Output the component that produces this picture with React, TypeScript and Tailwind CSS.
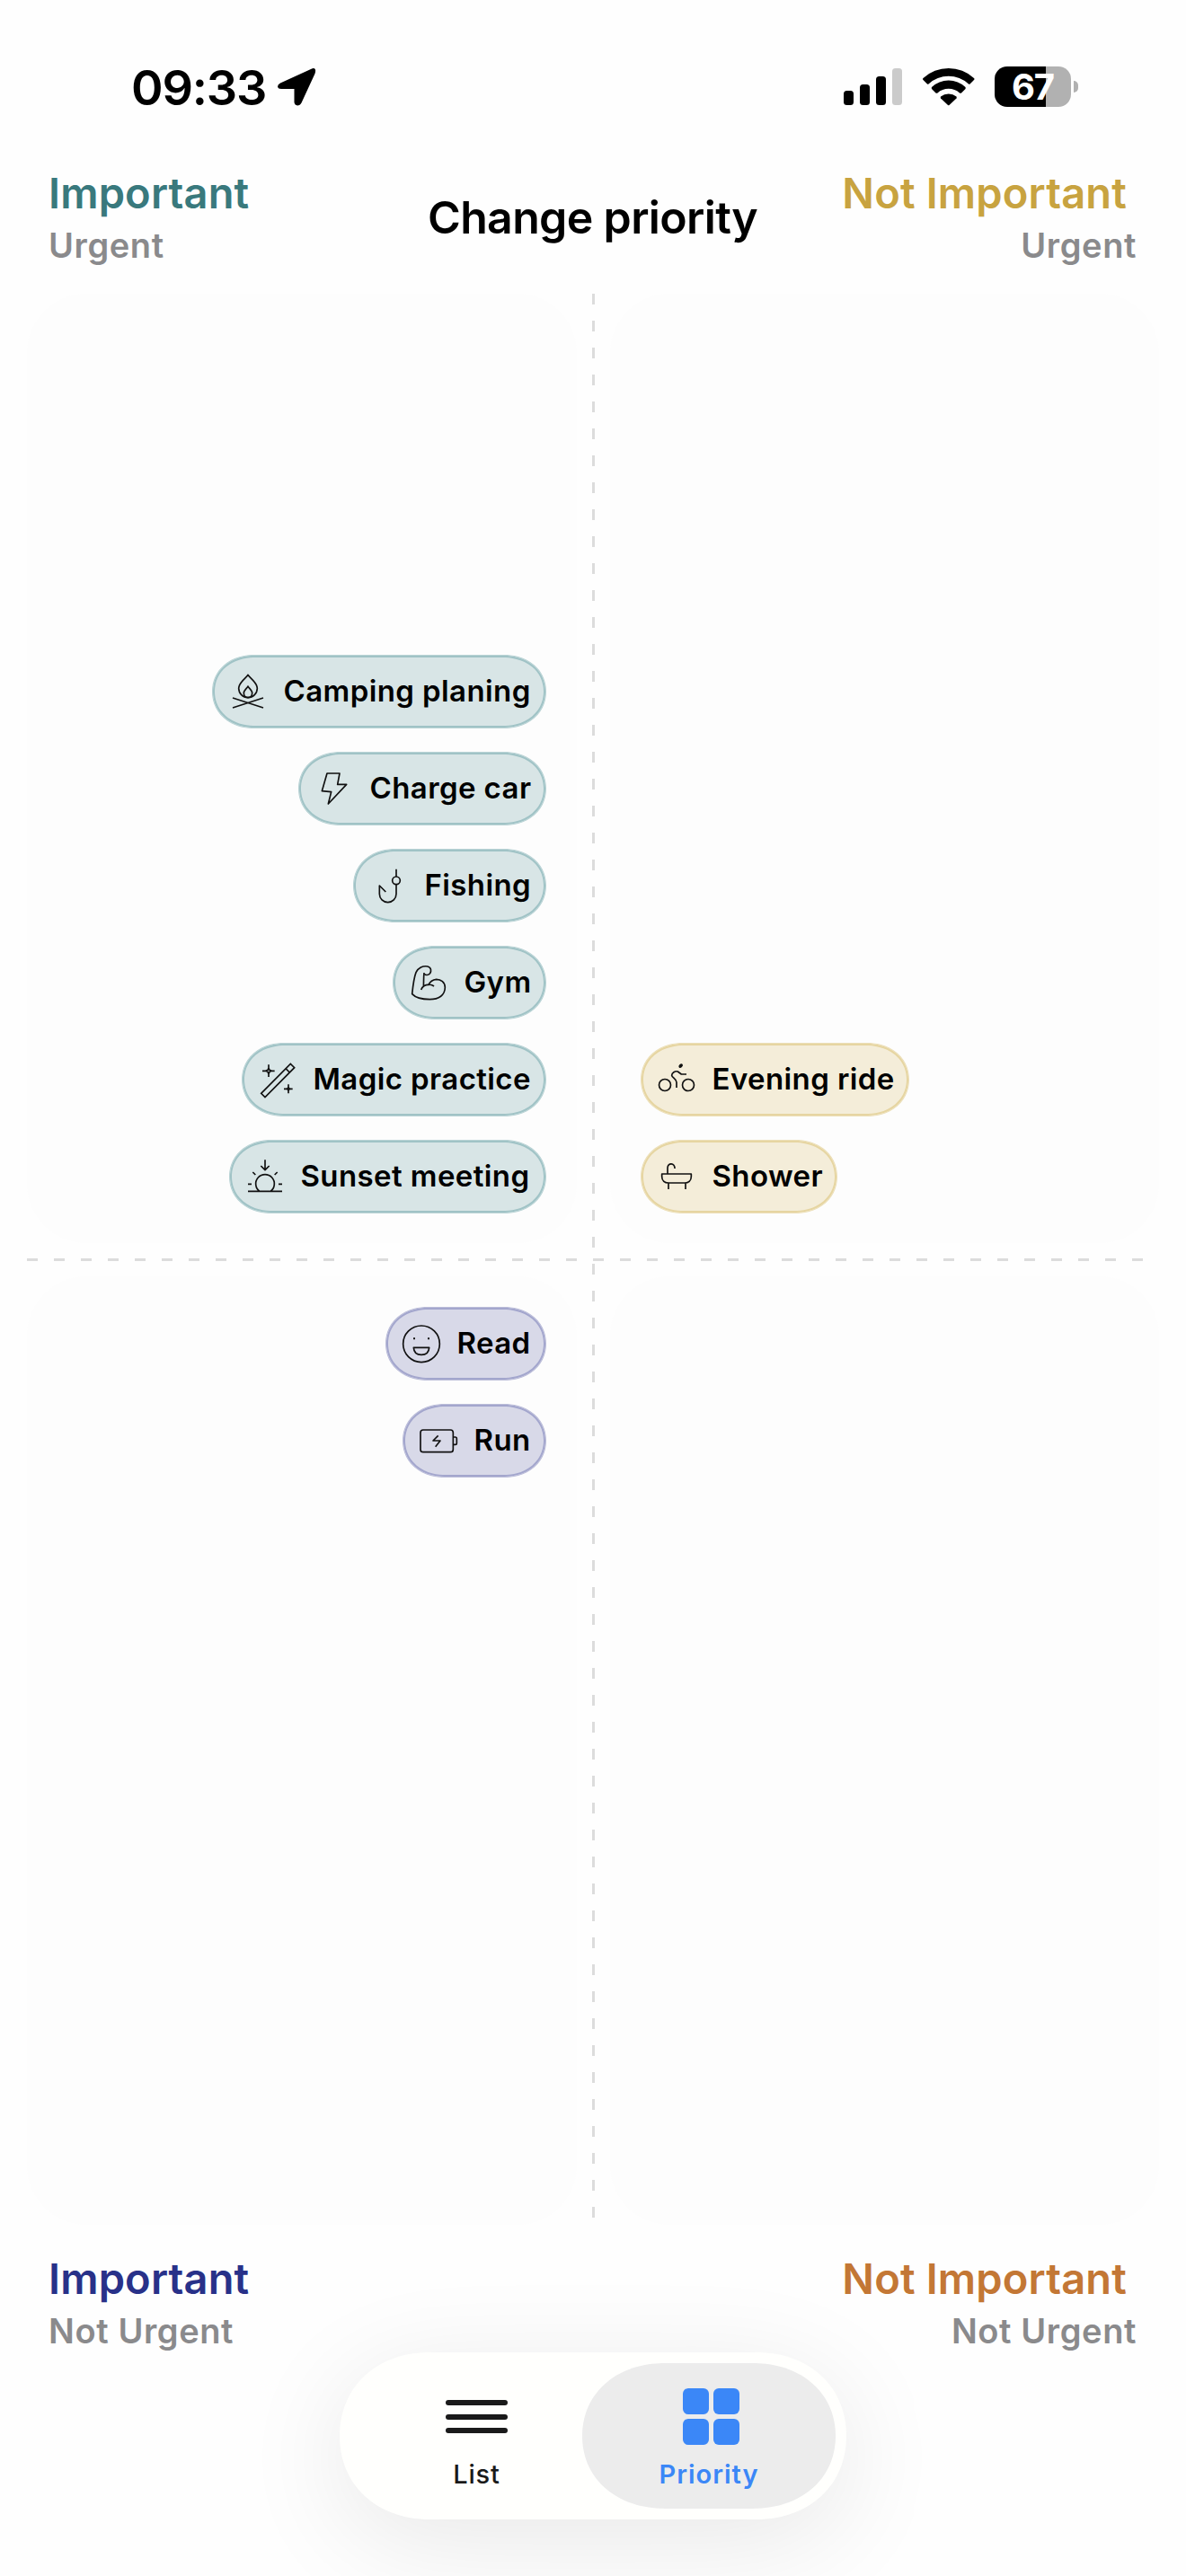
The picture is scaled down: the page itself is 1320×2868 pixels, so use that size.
import type { ReactNode } from "react";

type Tone = "teal" | "gold" | "indigo";

const toneClass: Record<Tone, string> = {
  teal: "bg-[#d8e5e6] border-[#b9d3d5] shadow-[inset_0_0_0_2px_#a0c3c6]",
  gold: "bg-[#f4edd9] border-[#ecdfb8] shadow-[inset_0_0_0_2px_#e6d5a1]",
  indigo: "bg-[#d8d9e8] border-[#bbbdd9] shadow-[inset_0_0_0_2px_#a3a6cd]",
};

function Icon({ cx, cy, children }: { cx: number; cy: number; children: ReactNode }) {
  return (
    <svg
      className="h-11 w-11 shrink-0"
      viewBox={`${cx - 66} ${cy - 66} 132 132`}
      fill="none"
      stroke="#111"
      strokeWidth="5"
      strokeLinejoin="round"
    >
      {children}
    </svg>
  );
}

const Campfire = () => (
  <Icon cx={168} cy={165}>
    <path d="M168 109C164 118 137 134 137 154C137 171 151 185 168 185S199 171 199 154C199 134 172 118 168 109Z" />
    <path d="M168 147C166 154 153 160 154 171C155 180 161 185 168 185S181 180 182 171C183 160 170 154 168 147Z" />
    <path d="M117 186L219 219M219 186L117 219" />
  </Icon>
);
const Bolt = () => (
  <Icon cx={455} cy={488}>
    <path d="M431 437H473L466 474H496L435 539L445 499L414 496Z" />
  </Icon>
);
const Hook = () => (
  <Icon cx={639} cy={812}>
    <path d="M663 757V782M663 808V840A28 28 0 0 1 607 840V812L628 833" />
    <circle cx="663" cy="795" r="13" />
  </Icon>
);
const Arm = () => (
  <Icon cx={771} cy={176}>
    <path d="M757 147C760 152 772 152 776 145C780 138 781 126 768 122C752 119 736 127 729 142C722 160 719 185 716 214C727 226 745 232 775 232C805 232 826 218 826 192C826 175 812 165 797 165C786 166 776 172 771 183" />
    <path d="M756 143C754 160 755 175 754 188M746 200C750 188 762 182 772 183C779 182 784 184 789 188" />
  </Icon>
);
const Wand = () => (
  <Icon cx={267} cy={500}>
    <path d="M212 546L310 447L323 460L225 559ZM294 463L307 476" strokeLinejoin="miter" />
    <path d="M237 450V461M237 481V491M216 471H227M247 471H257M237 461L240 468L247 471L240 474L237 481L234 474L227 471L234 468Z" />
    <path d="M303 516V525M303 537V546M288 531H297M309 531H317M303 525L305 529L309 531L305 533L303 537L301 533L297 531L301 529Z" />
  </Icon>
);
const Sunset = () => (
  <Icon cx={225} cy={824}>
    <path d="M225 768V801M211 788L225 802L239 788M184 809L193 818M266 809L257 818M168 849H180M270 849H282M168 873H282M207 873A31 31 0 1 1 243 873" />
  </Icon>
);
const Bike = () => (
  <Icon cx={219} cy={186}>
    <circle cx="180" cy="204" r="19.5" />
    <circle cx="258" cy="204" r="19.5" />
    <path d="M252 168H235L223 159C214 156 203 164 203 172C204 179 219 184 219 195V213" />
    <ellipse cx="233" cy="140" rx="8" ry="5.5" transform="rotate(-45 233 140)" fill="#111" stroke="none" />
  </Icon>
);
const Tub = () => (
  <Icon cx={219} cy={510}>
    <path d="M170 501H268V510C268 524 258 531 246 531H192C180 531 170 524 170 510ZM189 500V481C189 463 214 463 213 483M192 531V552M249 531V552" />
  </Icon>
);
const Smile = () => (
  <Icon cx={207} cy={377}>
    <circle cx="207" cy="378" r="61" />
    <path d="M180 360H186M228 360H234" strokeWidth="6" />
    <path d="M181 390H233C232 406 221 414 207 414S182 406 181 390Z" />
  </Icon>
);
const Battery = () => (
  <Icon cx={264} cy={701}>
    <rect x="204" y="665" width="109" height="74" rx="9" />
    <path d="M313 689H320Q325 689 325 694V709Q325 714 320 714H313M263 684L246 701H270L254 721" />
  </Icon>
);

function Pill({ tone, icon, label, w }: { tone: Tone; icon: ReactNode; label: string; w: string }) {
  return (
    <div
      className={`flex h-[82px] items-center gap-[18px] rounded-[47px/41px] border pl-[17px] [corner-shape:superellipse(1.08)] ${w} ${toneClass[tone]}`}
    >
      {icon}
      <span className="text-[33px] font-semibold leading-none tracking-[0.4px] whitespace-nowrap text-black">
        {label}
      </span>
    </div>
  );
}

function Heading({ title, sub, color, right }: { title: string; sub: string; color: string; right?: boolean }) {
  return (
    <div className={`flex flex-col ${right ? "items-end" : "items-start"}`}>
      <h2
        className={`text-[47px] leading-[58px] font-semibold tracking-[0.15px] whitespace-nowrap ${color} ${right ? "mr-[11px]" : ""}`}
      >
        {title}
      </h2>
      <p className="text-[38px] leading-[58px] font-semibold tracking-[0.6px] whitespace-nowrap text-[#8a8a8c]">
        {sub}
      </p>
    </div>
  );
}

function StatusBar() {
  return (
    <div className="flex h-[186px] shrink-0 items-start justify-between pt-[72px] pr-[120px] pl-[146px]">
      <div className="flex h-[50px] items-center">
        <span className="w-[163px] pt-[2px] text-[54px] leading-none font-semibold tracking-[-1.2px]">09:33</span>
        <svg className="h-[42px] w-[43px]" viewBox="0 0 43 42">
          <path
            d="M37.500 .8L3 16.500Q0 18 0 20.500Q.5 23 4 23H18.500V38Q19 41 22 41.500Q25 41.500 26.500 38.500L41.500 6Q43 1.500 41 .3Q39.500-.3 37.500 .8Z"
            fill="#000"
          />
        </svg>
      </div>
      <div className="flex h-[50px] items-start pt-[2px]">
        <svg className="h-[45px] w-[168px]" viewBox="0 0 168 45">
          <rect x="0" y="27" width="11" height="16" rx="3.500" />
          <rect x="18" y="20" width="11" height="23" rx="3.500" />
          <rect x="36" y="11" width="11" height="32" rx="3.500" />
          <rect x="54" y="2" width="11" height="41" rx="3.500" fill="#cbcbcb" />
          <path d="M88.500 13A41.500 41.500 0 0 1 145 13Q146 14 145 15L140.500 19.500Q140 20 139 19.500A33 33 0 0 0 94.500 19.500Q93.500 20 93 19.500L88.500 15Q87.500 14 88.500 13Z" />
          <path d="M98 23A27.500 27.500 0 0 1 135.500 23Q136 24 135.500 25L131 29.500Q130 30 129 29.500A18.500 18.500 0 0 0 104.500 29.500Q103.500 30 102.500 29.500L98 25Q97.500 24 98 23Z" />
          <path d="M108 33.500A14 14 0 0 1 125.500 33.500Q126 34.500 125.500 35.500L117.500 43Q116.800 43.500 116 43L108 35.500Q107.500 34.500 108 33.500Z" />
        </svg>
        <div className="flex items-center gap-[3px]">
          <div className="flex h-[45px] w-[85px] items-center justify-center rounded-[14px] bg-[linear-gradient(to_right,#000_57px,#b1b1b1_57px)] text-[40px] leading-[45px] font-bold tracking-[-1px] text-white">
            67
          </div>
          <div className="h-[13px] w-[5px] rounded-r-full bg-[#b1b1b1]" />
        </div>
      </div>
    </div>
  );
}

export default function App() {
  return (
    <div className="flex h-[2868px] w-[1320px] flex-col overflow-hidden bg-[#fefefe] font-['Inter',sans-serif] text-black">
      <StatusBar />
      <header className="grid h-[141px] shrink-0 grid-cols-[1fr_auto_1fr] items-start pr-[55px] pl-[54px]">
        <Heading title="Important" sub="Urgent" color="text-[#39797d]" />
        <h1 className="pt-[27px] text-[50px] leading-[58px] font-semibold tracking-[-0.65px] whitespace-nowrap">
          Change priority
        </h1>
        <Heading title="Not Important" sub="Urgent" color="text-[#c8a340]" right />
      </header>

      <main className="relative mx-[30px] grid h-[2150px] shrink-0 grid-cols-2 grid-rows-2 gap-[37px]">
        <section className="flex flex-col items-end justify-end gap-[26px] rounded-[66px] bg-[#fdfdfd] pr-[34px] pb-[33px]">
          <Pill tone="teal" icon={<Campfire />} label="Camping planing" w="w-[372px]" />
          <Pill tone="teal" icon={<Bolt />} label="Charge car" w="w-[276px]" />
          <Pill tone="teal" icon={<Hook />} label="Fishing" w="w-[215px]" />
          <Pill tone="teal" icon={<Arm />} label="Gym" w="w-[171px]" />
          <Pill tone="teal" icon={<Wand />} label="Magic practice" w="w-[339px]" />
          <Pill tone="teal" icon={<Sunset />} label="Sunset meeting" w="w-[353px]" />
        </section>
        <section className="flex flex-col items-start justify-end gap-[26px] rounded-[66px] bg-[#fdfdfd] pb-[33px] pl-[34px]">
          <Pill tone="gold" icon={<Bike />} label="Evening ride" w="w-[299px]" />
          <Pill tone="gold" icon={<Tub />} label="Shower" w="w-[219px]" />
        </section>
        <section className="flex flex-col items-end gap-[26px] rounded-[66px] bg-[#fdfdfd] pt-[34px] pr-[34px]">
          <Pill tone="indigo" icon={<Smile />} label="Read" w="w-[179px]" />
          <Pill tone="indigo" icon={<Battery />} label="Run" w="w-[160px]" />
        </section>
        <section className="rounded-[66px] bg-[#fdfdfd]" />
        <div className="absolute inset-y-0 left-[628.5px] w-[3px] bg-[repeating-linear-gradient(to_bottom,#dcdcdc_0_12px,transparent_12px_30px)]" />
        <div className="absolute inset-x-0 top-[1074px] h-[3px] bg-[repeating-linear-gradient(to_right,#dcdcdc_0_12px,transparent_12px_30px)]" />
      </main>

      <footer className="flex h-[142px] shrink-0 items-start justify-between pt-[31px] pr-[55px] pl-[54px]">
        <Heading title="Important" sub="Not Urgent" color="text-[#283189]" />
        <Heading title="Not Important" sub="Not Urgent" color="text-[#c37735]" right />
      </footer>

      <nav className="mx-auto flex h-[186px] w-[564px] shrink-0 items-center rounded-[100px/93px] bg-[#fffffd] px-3 shadow-[0_24px_120px_rgba(0,0,0,0.09)] [corner-shape:superellipse(1.08)]">
        <button className="flex h-[162px] w-[258px] flex-col items-center pt-[41px] pl-[23px]">
          <span className="flex h-[37px] w-[69px] flex-col justify-between">
            <i className="h-[6px] rounded-full bg-[#1a1a1a]" />
            <i className="h-[6px] rounded-full bg-[#1a1a1a]" />
            <i className="h-[6px] rounded-full bg-[#1a1a1a]" />
          </span>
          <span className="mt-[30px] text-[29px] leading-[32px] font-medium tracking-[0.8px] text-[#1a1a1a]">List</span>
        </button>
        <button className="flex h-[162px] w-[282px] flex-col items-center rounded-[92px/81px] bg-[#ececec] pt-7 [corner-shape:superellipse(1.08)]">
          <span className="ml-1 grid grid-cols-2 gap-[5px]">
            <i className="h-[29px] w-[29px] rounded-md bg-[#3b87f7]" />
            <i className="h-[29px] w-[29px] rounded-md bg-[#3b87f7]" />
            <i className="h-[29px] w-[29px] rounded-md bg-[#3b87f7]" />
            <i className="h-[29px] w-[29px] rounded-md bg-[#3b87f7]" />
          </span>
          <span className="mt-[17px] text-[29px] leading-[32px] font-semibold tracking-[1px] text-[#3b87f7]">
            Priority
          </span>
        </button>
      </nav>
    </div>
  );
}
